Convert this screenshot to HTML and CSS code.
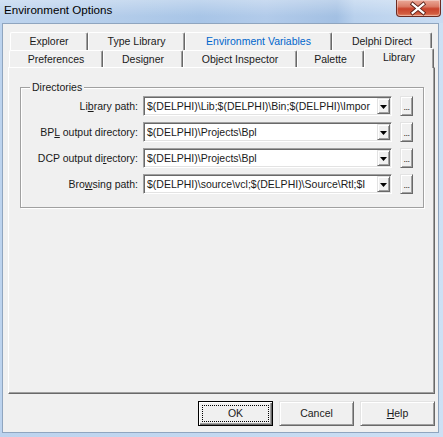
FILE: index.html
```html
<!DOCTYPE html>
<html>
<head>
<meta charset="utf-8">
<link rel="stylesheet" href="styles.css">
</head>
<body>
<div class="window">
  <div class="titlebar">
    <span class="title">Environment Options</span>
    <div class="close">
      <svg width="45" height="17" viewBox="0 0 45 17">
        <path d="M17 4 L28 13 M28 4 L17 13" stroke="#5a2018" stroke-width="4" stroke-linecap="square" fill="none"/>
        <path d="M17 4 L28 13 M28 4 L17 13" stroke="#ffffff" stroke-width="2.2" stroke-linecap="square" fill="none"/>
      </svg>
    </div>
  </div>
  <div class="client">
    <div class="pagecontrol">
      <div class="tabrow back">
        <div class="tab w-explorer">Explorer</div>
        <div class="tab w-typelib">Type Library</div>
        <div class="tab w-envvars hot">Environment Variables</div>
        <div class="tab w-delphi">Delphi Direct</div>
      </div>
      <div class="tabrow front">
        <div class="tab w-prefs">Preferences</div>
        <div class="tab w-designer">Designer</div>
        <div class="tab w-objinsp">Object Inspector</div>
        <div class="tab w-palette">Palette</div>
        <div class="tab w-library selected">Library</div>
      </div>
      <div class="page">
        <div class="group">
          <div class="group-title">Directories</div>
          <div class="rows">
            <div class="row">
              <span class="label">Li<u>b</u>rary path:</span>
              <div class="combo"><span class="value">$(DELPHI)\Lib;$(DELPHI)\Bin;$(DELPHI)\Impor</span><span class="drop"><svg width="7" height="4" viewBox="0 0 7 4"><path d="M0 0H7L3.5 4Z" fill="#000"/></svg></span></div>
              <span class="dots">...</span>
            </div>
            <div class="row">
              <span class="label">BP<u>L</u> output directory:</span>
              <div class="combo"><span class="value">$(DELPHI)\Projects\Bpl</span><span class="drop"><svg width="7" height="4" viewBox="0 0 7 4"><path d="M0 0H7L3.5 4Z" fill="#000"/></svg></span></div>
              <span class="dots">...</span>
            </div>
            <div class="row">
              <span class="label">DCP output di<u>r</u>ectory:</span>
              <div class="combo"><span class="value">$(DELPHI)\Projects\Bpl</span><span class="drop"><svg width="7" height="4" viewBox="0 0 7 4"><path d="M0 0H7L3.5 4Z" fill="#000"/></svg></span></div>
              <span class="dots">...</span>
            </div>
            <div class="row">
              <span class="label">Bro<u>w</u>sing path:</span>
              <div class="combo"><span class="value">$(DELPHI)\source\vcl;$(DELPHI)\Source\Rtl;$I</span><span class="drop"><svg width="7" height="4" viewBox="0 0 7 4"><path d="M0 0H7L3.5 4Z" fill="#000"/></svg></span></div>
              <span class="dots">...</span>
            </div>
          </div>
        </div>
      </div>
    </div>
    <div class="buttons">
      <div class="btn default"><span>OK</span></div>
      <div class="btn"><span>Cancel</span></div>
      <div class="btn"><span><u>H</u>elp</span></div>
    </div>
  </div>
</div>
</body>
</html>
```

FILE: styles.css
```css
html, body {
  margin: 0;
  padding: 0;
  background: #c4d9f0;
}

body {
  font-family: "Liberation Sans", Arial, sans-serif;
  color: #000;
}

.window {
  width: 443px;
  height: 437px;
  display: flex;
  flex-direction: column;
  background: linear-gradient(90deg, #bcd3ee 0%, #c3d8f0 50%, #cde0f4 100%);
  overflow: hidden;
}

.titlebar {
  height: 23px;
  flex: none;
  display: flex;
  align-items: flex-start;
  background:
    linear-gradient(180deg, rgba(255,255,255,0.30) 0%, rgba(255,255,255,0) 70%),
    linear-gradient(90deg, #bed4ee 0%, #b4cdea 25%, #a8c5e7 45%, #b2cbea 60%, #a3c0e3 76%, #b9d1ed 80%, #c9dcf2 100%);
}

.title {
  font-size: 11.6px;
  line-height: 20px;
  padding-left: 4px;
  color: #000;
}

.close {
  margin-left: auto;
  margin-right: 2px;
  width: 45px;
  height: 17px;
  box-sizing: border-box;
  border: 1px solid #6b2b22;
  border-top: none;
  border-radius: 0 0 4px 4px;
  background: linear-gradient(180deg, #eba999 0%, #db7d68 40%, #c9432c 55%, #d25c40 85%, #e68c6c 100%);
  box-shadow: inset 0 0 0 1px rgba(255,255,255,0.35);
  display: flex;
  align-items: center;
  justify-content: center;
  overflow: hidden;
}

.close svg {
  display: block;
  margin-left: -1px;
}

.client {
  flex: 1;
  margin: 0 4px 4px 2px;
  border: 1px solid #8fa5bf;
  background: #f0f0f0;
  padding: 8px 3px 6px 5px;
  display: flex;
  flex-direction: column;
  font-size: 10.5px;
  color: #1a1a1a;
}

.pagecontrol {
  display: flex;
  flex-direction: column;
}

.tabrow {
  display: flex;
  height: 18px;
}

.tabrow.back {
  margin-left: 2px;
}

.tabrow.front {
  margin-left: 1px;
  height: 17px;
  position: relative;
  z-index: 1;
}

.tab {
  box-sizing: border-box;
  height: 100%;
  border-top: 1px solid #ffffff;
  border-left: 1px solid #ffffff;
  border-right: 1px solid #696969;
  box-shadow: inset -1px 0 0 #a0a0a0;
  border-radius: 2px 2px 0 0;
  background: #f0f0f0;
  text-align: center;
  line-height: 16px;
  white-space: nowrap;
}

.tab.hot {
  color: #0066cc;
}

.tab.selected {
  margin-top: -2px;
  height: 20px;
}

.w-explorer { width: 78px; }
.w-typelib { width: 97px; }
.w-envvars { width: 147px; }
.w-delphi { width: 100px; }
.w-prefs { width: 94px; }
.w-designer { width: 80px; }
.w-objinsp { width: 114px; }
.w-palette { width: 67px; }
.w-library { width: 70px; }

.page {
  height: 327px;
  box-sizing: border-box;
  border: 1px solid;
  border-color: #ffffff #696969 #696969 #ffffff;
  box-shadow: inset -1px -1px 0 #a0a0a0;
  padding-top: 19px;
}

.group {
  margin: 0 10px 0 11px;
  border: 1px solid #a0a0a0;
  box-shadow: 1px 1px 0 #ffffff, inset 1px 1px 0 #ffffff;
}

.group-title {
  width: max-content;
  margin: -7px 0 0 9px;
  padding: 0 2px;
  line-height: 13px;
  background: #f0f0f0;
}

.rows {
  display: flex;
  flex-direction: column;
  gap: 6px;
  padding: 2px 0 13px;
}

.row {
  display: flex;
  align-items: center;
  height: 20px;
}

.label {
  width: 117px;
  text-align: right;
  white-space: nowrap;
}

.combo {
  margin-left: 5px;
  width: 249px;
  height: 20px;
  box-sizing: border-box;
  border: 1px solid;
  border-color: #a0a0a0 #ffffff #ffffff #a0a0a0;
  box-shadow: inset 1px 1px 0 #696969, inset -1px -1px 0 #e3e3e3;
  background: #ffffff;
  padding: 1px;
  display: flex;
  align-items: center;
}

.value {
  flex: 1;
  min-width: 0;
  overflow: hidden;
  white-space: nowrap;
  padding-left: 2px;
  line-height: 16px;
}

.drop {
  flex: none;
  width: 13px;
  height: 16px;
  box-sizing: border-box;
  border: 1px solid;
  border-color: #e3e3e3 #696969 #696969 #e3e3e3;
  box-shadow: inset 1px 1px 0 #ffffff, inset -1px -1px 0 #a0a0a0;
  background: #f0f0f0;
  display: flex;
  align-items: center;
  justify-content: center;
}

.drop svg {
  display: block;
  margin-top: 1px;
}

.dots {
  margin-left: 8px;
  width: 13px;
  height: 20px;
  box-sizing: border-box;
  border: 1px solid;
  border-color: #e3e3e3 #696969 #696969 #e3e3e3;
  box-shadow: inset 1px 1px 0 #ffffff, inset -1px -1px 0 #a0a0a0;
  background: #f0f0f0;
  text-align: center;
  line-height: 20px;
  font-size: 9px;
  letter-spacing: -0.5px;
  overflow: hidden;
}

.buttons {
  display: flex;
  justify-content: flex-end;
  gap: 6px;
  margin-top: 7px;
}

.btn {
  width: 75px;
  height: 25px;
  box-sizing: border-box;
  border: 1px solid;
  border-color: #e3e3e3 #696969 #696969 #e3e3e3;
  box-shadow: inset 1px 1px 0 #ffffff, inset -1px -1px 0 #a0a0a0;
  background: #f0f0f0;
  display: flex;
  align-items: center;
  justify-content: center;
  line-height: 13px;
}

.btn.default {
  border: 1px solid #000000;
  box-shadow: inset 1px 1px 0 #ffffff, inset -1px -1px 0 #696969, inset -2px -2px 0 #a0a0a0;
  outline: 1px dotted #000000;
  outline-offset: -5px;
}
```
